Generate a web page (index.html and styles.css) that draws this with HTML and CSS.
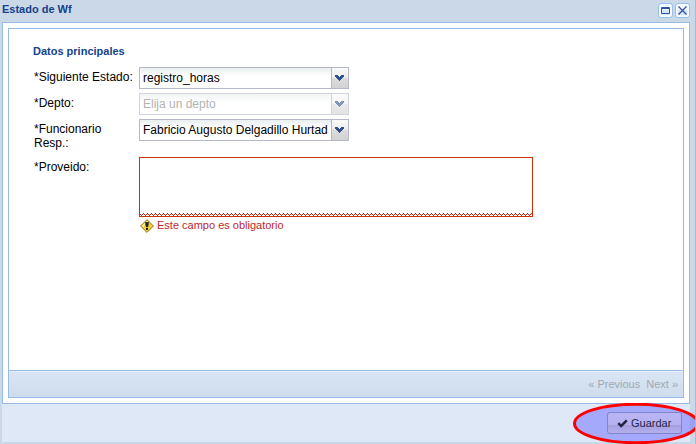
FILE: index.html
```html
<!DOCTYPE html>
<html lang="es">
<head>
<meta charset="utf-8">
<title>Estado de Wf</title>
<link rel="stylesheet" href="styles.css">
</head>
<body>
<div class="window">
  <header class="titlebar">
    <span class="title">Estado de Wf</span>
    <svg class="tool" width="15" height="15" viewBox="0 0 15 15"><rect x=".5" y=".5" width="14" height="14" rx="2.5" fill="#f5faff" stroke="#9abfea"/><path d="M3 7h9v5H3z" fill="#d4e6fa"/><path d="M3.5 4.5h8v6h-8zM3 5.5h9" fill="none" stroke="#2c55a5"/></svg>
    <svg class="tool" width="15" height="15" viewBox="0 0 15 15"><rect x=".5" y=".5" width="14" height="14" rx="2.5" fill="#f5faff" stroke="#9abfea"/><path d="M3 7h9v5H3z" fill="#d4e6fa"/><path d="M3.5 3.5l8 8M11.5 3.5l-8 8" fill="none" stroke="#3450a0" stroke-width="1.3"/></svg>
  </header>
  <main class="body">
    <div class="wizard">
      <form class="form">
        <h2 class="heading">Datos principales</h2>
        <div class="row">
          <span class="label">*Siguiente Estado:</span>
          <div class="combo"><span class="value">registro_horas</span><span class="trigger"><svg width="9" height="6" viewBox="0 0 9 6"><path d="M0 0h3v1h1v1h1V1h1V0h3v2H8v1H7v1H6v1H5v1H4V5H3V4H2V3H1V2H0z" fill="#2f4f8f"/></svg></span></div>
        </div>
        <div class="row">
          <span class="label">*Depto:</span>
          <div class="combo disabled"><span class="value">Elija un depto</span><span class="trigger"><svg width="9" height="6" viewBox="0 0 9 6"><path d="M0 0h3v1h1v1h1V1h1V0h3v2H8v1H7v1H6v1H5v1H4V5H3V4H2V3H1V2H0z" fill="#2f4f8f"/></svg></span></div>
        </div>
        <div class="row tall">
          <span class="label">*Funcionario Resp.:</span>
          <div class="combo"><span class="value">Fabricio Augusto Delgadillo Hurtad</span><span class="trigger"><svg width="9" height="6" viewBox="0 0 9 6"><path d="M0 0h3v1h1v1h1V1h1V0h3v2H8v1H7v1H6v1H5v1H4V5H3V4H2V3H1V2H0z" fill="#2f4f8f"/></svg></span></div>
        </div>
        <div class="row area">
          <span class="label">*Proveido:</span>
          <div>
            <div class="textarea">
              <svg width="392" height="3" shape-rendering="crispEdges"><defs><pattern id="wave" width="4" height="3" patternUnits="userSpaceOnUse"><path d="M0 1h1v1H0zM1 2h1v1H1zM2 1h1v1H2zM3 0h1v1H3z" fill="#d21c1c"/></pattern></defs><rect width="392" height="3" fill="url(#wave)"/></svg>
            </div>
            <div class="error">
              <svg width="14" height="14" viewBox="0 0 14 14"><path d="M7 .6L13.4 7 7 13.4.6 7z" fill="#f3cf3c" stroke="#8c7423"/><path d="M7 1.8L2 7l1.2 1.2L7.5 2.6z" fill="#fff3a5"/><path d="M5.3 3h3.4v2.4L7.9 8.3H6.1l-.8-2.9zM6 9h2v2H6z" fill="#24272f"/></svg>
              <span>Este campo es obligatorio</span>
            </div>
          </div>
        </div>
      </form>
      <div class="pager"><span>« Previous</span><span>Next »</span></div>
    </div>
  </main>
  <footer class="footer">
    <div class="save"><svg width="11" height="9" viewBox="0 0 11 9"><path d="M1.2 4.2L4.2 7 9.8 1.4" fill="none" stroke="#202447" stroke-width="2.5"/></svg><span>Guardar</span></div>
  </footer>
  <svg class="highlight" width="126" height="44" viewBox="0 0 126 44"><ellipse cx="65" cy="20.5" rx="61.5" ry="19.2" fill="#6a6aff" fill-opacity=".5" stroke="#f00" stroke-width="3"/></svg>
</div>
</body>
</html>
```
FILE: styles.css
```css
* { box-sizing: border-box; }
body { margin: 0; font-family: "Liberation Sans", Arial, sans-serif; }
.window {
  position: relative;
  width: 696px;
  height: 444px;
  padding: 0 5px 0 2px;
  overflow: hidden;
  background: #cbd8e8;
  border-right: 1px solid #a5b9d8;
}
.titlebar {
  display: flex;
  gap: 2px;
  height: 22px;
  padding-top: 3px;
}
.title {
  flex: 1;
  font-weight: bold;
  font-size: 11px;
  line-height: 13px;
  color: #15428b;
}
.tool { display: block; }
.body {
  width: 688px;
  height: 382px;
  padding: 5px;
  background: #fff;
  border: 1px solid #99bbe8;
}
.wizard {
  display: flex;
  flex-direction: column;
  height: 370px;
  border: 1px solid #99bbe8;
}
.form { flex: 1; padding: 16px 0 0 24px; }
.heading {
  margin: 0 0 9px;
  font-size: 11px;
  line-height: 13px;
  color: #15428b;
}
.row {
  display: flex;
  height: 26px;
  padding-left: 1px;
  font-size: 12px;
}
.label {
  flex: none;
  width: 105px;
  padding: 3px 5px 0 0;
  line-height: 14px;
  color: #000;
}
.tall { height: 38px; }
.combo {
  display: flex;
  width: 210px;
  height: 22px;
  border: 1px solid #b5b8c8;
  background: linear-gradient(#e9eef0, #fff 8px);
}
.value {
  flex: none;
  width: 191px;
  padding-left: 3px;
  white-space: nowrap;
  line-height: 20px;
}
.trigger {
  display: flex;
  width: 17px;
  padding: 7px 0 0 3px;
  border-left: 1px solid #b5b8c8;
  background: linear-gradient(#fafafa, #ececec 50%, #dcdcdc 51%, #d2d2d2);
}
.disabled { opacity: .6; }
.disabled .value { color: #808080; }
.textarea {
  display: flex;
  align-items: flex-end;
  width: 394px;
  height: 60px;
  border: 1px solid #c30;
  background: #fff;
}
.textarea svg { display: block; }
.error {
  display: flex;
  gap: 3px;
  padding: 2px 0 0 1px;
  font-size: 11px;
  line-height: 13px;
  color: #c0272b;
}
.pager {
  display: flex;
  justify-content: flex-end;
  gap: 6px;
  height: 27px;
  padding: 7px 5px 0;
  border-top: 1px solid #99bbe8;
  box-shadow: inset 0 1px #e9f0f9;
  background: linear-gradient(#dae6f4, #cddced);
  font-size: 11px;
  line-height: 13px;
  color: #a1a9b3;
}
.footer {
  display: flex;
  justify-content: flex-end;
  width: 688px;
  height: 38px;
  padding: 8px 8px 0;
  background: #dfe8f6;
}
.save {
  position: relative;
  z-index: 1;
  display: flex;
  gap: 3px;
  width: 75px;
  height: 22px;
  padding: 4px 0 0 9px;
  border: 1px solid #8084c8;
  border-radius: 3px;
  background: linear-gradient(#bab6f5, #b5b1ee 58%, #a29edc 60%, #b4aff0);
  font-size: 11px;
  line-height: 13px;
  color: #22244c;
}
.save svg { margin-top: 2px; }
.highlight {
  position: absolute;
  left: 571px;
  top: 403px;
}
```
